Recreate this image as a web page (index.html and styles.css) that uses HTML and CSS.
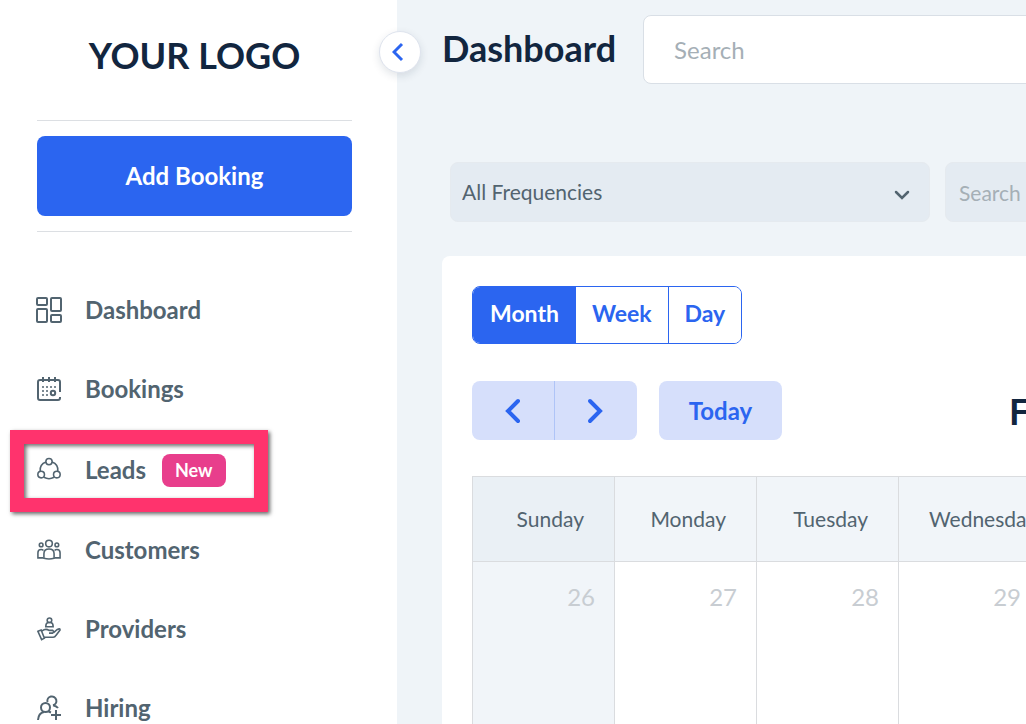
FILE: index.html
```html
<!DOCTYPE html>
<html lang="en">
    <head>
        <meta charset="utf-8">
        <meta name="viewport" content="width=device-width, initial-scale=1">
        <title>Dashboard</title>

        <link rel="stylesheet" href="styles.css">
    </head>
    <body>
        <div class="app">
            <aside class="sidebar">
                <div class="logo">YOUR LOGO</div>
                <div class="booking">
                    <button class="add-booking" type="button">Add Booking</button>
                </div>

                <nav class="menu">
                    <a href="#dashboard">
                        <svg viewBox="0 0 24 24" class="bold">
                            <rect x="0" y="0" width="10" height="7" rx="1"/>
                            <rect x="14" y="0" width="10" height="13" rx="1"/>
                            <rect x="0" y="11" width="10" height="13" rx="1"/>
                            <rect x="14" y="17" width="10" height="7" rx="1"/>
                        </svg>
                        <span>Dashboard</span>
                    </a>
                    <a href="#bookings">
                        <svg viewBox="0 0 24 24" class="bold">
                            <path d="M23 15V5q0-2-2-2H3Q1 3 1 5v16q0 2 2 2h18q2 0 2-2v-1M6 0v5M12 0v5M18 0v5"/>
                            <path d="M5 10h2M9 10h2M13 10h2M17 10h2M5 14h2M9 14h2M5 18h2M9 18h2" stroke-width="1.500"/>
                            <circle cx="16" cy="16" r="2.200"/>
                        </svg>
                        <span>Bookings</span>
                    </a>
                    <a href="#leads" class="highlight">
                        <svg viewBox="0 0 26 26">
                            <circle cx="13" cy="5" r="3.400"/>
                            <circle cx="4.500" cy="19" r="3.600"/>
                            <circle cx="21.500" cy="19" r="3.600"/>
                            <path d="M9.700 5.500C5.500 7 3 11 3.500 15.500M16.300 5.500C20.500 7 23 11 22.500 15.500M7.500 22q5.500 3 11 0"/>
                        </svg>
                        <span>Leads</span>
                        <span class="badge">New</span>
                    </a>
                    <a href="#customers">
                        <svg viewBox="0 0 26 26">
                            <circle cx="13" cy="6" r="3.600"/>
                            <circle cx="4.500" cy="7.500" r="2"/>
                            <circle cx="21.500" cy="7.500" r="2"/>
                            <path d="M7.500 22v-5q0-5 5.500-5t5.500 5v5q-5.500 1.500-11 0z"/>
                            <path d="M7 13.500q-1-1-2.500-1Q1 12.500 1 16v5.500h6M19 13.500q1-1 2.500-1 3.500 0 3.500 3.500v5.500h-6"/>
                        </svg>
                        <span>Customers</span>
                    </a>
                    <a href="#providers">
                        <svg viewBox="0 0 26 26">
                            <circle cx="13.500" cy="3.500" r="2.500"/>
                            <path d="M9.500 10.500q0-4 2.500-4.500h3q2.500.5 2.500 4.500z"/>
                            <path d="M1 15.500l3.500-1.500 3.500 9-3 1.500zM5.500 15q4-3 7.500-.5h4q2 1.500 0 3h-4M18 17l4-3.500q3-1.500 3 .5l-4.500 6q-1 2-3 2H8"/>
                        </svg>
                        <span>Providers</span>
                    </a>
                    <a href="#hiring">
                        <svg viewBox="0 0 24 24" class="bold">
                            <path d="M10.500 6a4.500 4.500 0 1 1 5.500 3.300M16 9.300q3.500.7 5 2.700"/>
                            <circle cx="8.500" cy="11.500" r="4.500"/>
                            <path d="M1 24q.5-7 6-8M11.500 15.500l2.500 1M19 14v10M14 19h10"/>
                        </svg>
                        <span>Hiring</span>
                    </a>
                </nav>

                <button class="collapse" type="button" aria-label="Collapse menu">
                    <svg viewBox="0 0 12 20"><path d="M10 2L2 10l8 8"/></svg>
                </button>
            </aside>

            <main class="main">
                <header class="header">
                    <h1>Dashboard</h1>
                    <input type="search" placeholder="Search" aria-label="Search">
                </header>

                <div class="filters">
                    <div class="select">
                        <select aria-label="Frequency">
                            <option>All Frequencies</option>
                        </select>
                        <svg viewBox="0 0 16 10"><path d="M2 2l6 6 6-6"/></svg>
                    </div>
                    <input type="search" placeholder="Search" aria-label="Search bookings">
                </div>

                <section class="calendar">
                    <div class="views">
                        <button type="button" class="active">Month</button>
                        <button type="button">Week</button>
                        <button type="button">Day</button>
                    </div>

                    <div class="toolbar">
                        <div class="arrows">
                            <button type="button" aria-label="Previous month">
                                <svg viewBox="0 0 16 26"><path d="M13 3L3 13l10 10"/></svg>
                            </button>
                            <button type="button" aria-label="Next month">
                                <svg viewBox="0 0 16 26"><path d="M3 3l10 10L3 23"/></svg>
                            </button>
                        </div>
                        <button type="button" class="today">Today</button>
                        <h2>February</h2>
                    </div>

                    <table>
                        <thead>
                            <tr>
                                <th>Sunday</th>
                                <th>Monday</th>
                                <th>Tuesday</th>
                                <th>Wednesday</th>
                            </tr>
                        </thead>
                        <tbody>
                            <tr>
                                <td>26</td>
                                <td>27</td>
                                <td>28</td>
                                <td>29</td>
                            </tr>
                        </tbody>
                    </table>
                </section>
            </main>
        </div>
    </body>
</html>
```
FILE: styles.css
```css
*, *::after {
    box-sizing: border-box;
}

body {
    font-family: Lato, sans-serif;
    margin: 0;
    color: #526470;
    background: #eff4f8;
}

button, input, select {
    font-family: inherit;
    color: inherit;
    margin: 0;
}

button {
    border: none;
    padding: 0 0 2px;
    cursor: pointer;
}

svg {
    display: block;
    flex: none;
    fill: none;
    stroke: currentColor;
}

.app {
    display: flex;
    height: 100vh;
    overflow: hidden;
}

/* sidebar */
.sidebar {
    position: relative;
    flex: none;
    width: 397px;
    padding: 0 45px 0 37px;
    background: #fff;
}

.logo {
    height: 120px;
    padding-top: 31px;
    font-size: 36px;
    line-height: 48px;
    font-weight: 700;
    text-align: center;
    color: #12263f;
}

.booking {
    padding: 15px 0;
    border-top: 1px solid #dcdfe3;
    border-bottom: 1px solid #dcdfe3;
}

.add-booking {
    display: block;
    width: 100%;
    height: 80px;
    border-radius: 8px;
    background: #2b65f0;
    color: #fff;
    font-size: 24px;
    font-weight: 700;
}

.menu {
    margin-top: 38px;
}

.menu a {
    position: relative;
    display: flex;
    align-items: center;
    padding: 24px 0;
    font-size: 24px;
    line-height: 31px;
    font-weight: 700;
    color: inherit;
    text-decoration: none;
}

.menu svg {
    width: 24px;
    height: 24px;
    margin-right: 24px;
    stroke-width: 1.7;
    overflow: visible;
}

.menu svg.bold {
    stroke-width: 2;
}

.badge {
    margin: 2px 0 -1px 16px;
    padding: 0 13px;
    border-radius: 8px;
    background: #e83e8c;
    color: #fff;
    font-size: 18px;
    line-height: 33px;
}

.menu .highlight::after {
    content: "";
    position: absolute;
    top: 2px;
    left: -27px;
    width: 258px;
    height: 82px;
    border: 14px solid #ff336d;
    box-shadow: 2px 2px 4px rgba(0, 0, 0, 0.6), inset 2px 2px 4px rgba(0, 0, 0, 0.6);
}

.collapse {
    position: absolute;
    top: 31px;
    right: -24px;
    display: flex;
    align-items: center;
    justify-content: center;
    width: 42px;
    height: 42px;
    padding: 0 4px 0 0;
    border: 1px solid #dfe4ee;
    border-radius: 50%;
    background: #fff;
    color: #2b65f0;
    box-shadow: 0 3px 8px rgba(18, 38, 63, 0.12);
}

.collapse svg {
    width: 12px;
    height: 20px;
    stroke-width: 3;
}

/* main column */
.main {
    flex: 1;
    min-width: 0;
    padding: 15px 0 0 45px;
    overflow: hidden;
}

.header {
    display: flex;
    gap: 27px;
}

h1, h2 {
    margin: 0;
    font-size: 36px;
    font-weight: 700;
    color: #12263f;
}

.header h1 {
    line-height: 66px;
}

.header input {
    flex: 1 0 400px;
    height: 69px;
    padding: 0 30px;
    border: 1px solid #d9dfe6;
    border-radius: 8px;
    background: #fff;
    font-size: 24px;
}

input::placeholder {
    color: #a5afb6;
    opacity: 1;
}

.filters {
    display: flex;
    gap: 15px;
    margin: 78px 0 34px 8px;
}

.select {
    position: relative;
    flex: none;
    width: 480px;
}

.select select, .filters input {
    width: 100%;
    height: 60px;
    border: 1px solid #e5eaef;
    border-radius: 8px;
    background: #e4ebf2;
    font-size: 21px;
}

.select select {
    appearance: none;
    padding: 0 40px 2px 11px;
}

.select svg {
    position: absolute;
    top: 28px;
    right: 20px;
    width: 16px;
    height: 10px;
    stroke-width: 2.5;
    stroke-linecap: round;
}

.filters input {
    flex: none;
    padding: 0 13px;
}

/* calendar */
.calendar {
    padding: 30px 0 0 30px;
    border-radius: 8px 0 0 0;
    background: #fff;
}

.views {
    display: flex;
    width: max-content;
    border: 1px solid #2b65f0;
    border-radius: 8px;
    overflow: hidden;
}

.views button {
    height: 56px;
    padding: 0 16px 4px;
    background: #fff;
    color: #2b65f0;
    font-size: 23px;
    font-weight: 700;
}

.views button + button {
    border-left: 1px solid #2b65f0;
}

.views .active {
    padding: 0 16px 4px 17px;
    background: #2b65f0;
    color: #fff;
}

.toolbar {
    display: flex;
    align-items: center;
    margin: 37px 0 36px;
}

.arrows {
    display: flex;
    flex: none;
    margin-right: 22px;
    border-radius: 8px;
    overflow: hidden;
}

.arrows button {
    display: flex;
    align-items: center;
    justify-content: center;
    width: 82px;
    height: 59px;
    padding: 0;
    background: #d6dffb;
    color: #2b65f0;
}

.arrows button + button {
    width: 83px;
    padding-right: 3px;
    border-left: 1px solid #afc4f7;
}

.arrows svg {
    width: 16px;
    height: 26px;
    stroke-width: 4;
    stroke-linecap: round;
}

.today {
    flex: none;
    width: 123px;
    height: 59px;
    padding: 0;
    border-radius: 8px;
    background: #d6dffb;
    color: #2b65f0;
    font-size: 24px;
    font-weight: 700;
}

.toolbar h2 {
    margin-left: 227px;
    line-height: 48px;
}

table {
    width: 569px;
    table-layout: fixed;
    border-collapse: collapse;
}

th, td {
    border: 1px solid #dadcdf;
    text-align: right;
}

th {
    height: 85px;
    padding: 0 30px 2px;
    background: #f1f5f9;
    font-size: 21px;
    font-weight: 400;
}

th:first-child {
    background: #eaf0f5;
}

td {
    height: 200px;
    padding: 20px 19px;
    vertical-align: top;
    font-size: 24px;
    color: #c8cdd2;
}

td:first-child {
    background: #f1f5f9;
}
```
